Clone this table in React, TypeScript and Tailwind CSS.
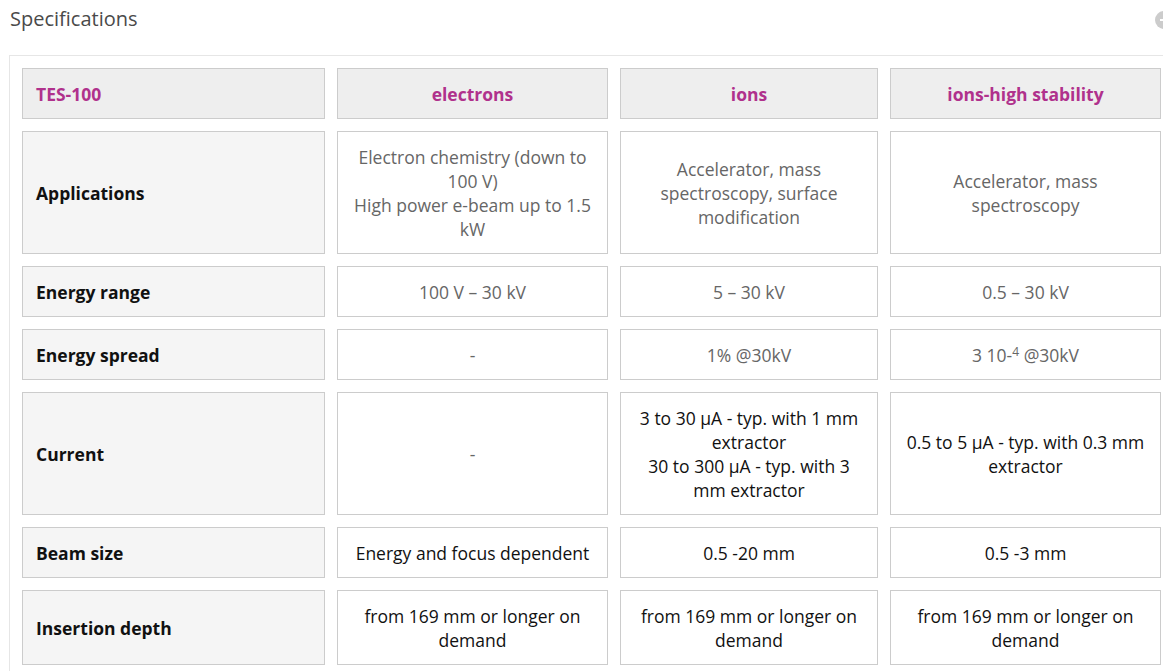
import React from "react";

type Cell = { lines: React.ReactNode[]; dark?: boolean };

const rows: { label: string; h: string; cells: Cell[] }[] = [
  {
    label: "Applications",
    h: "h-[123px]",
    cells: [
      { lines: ["Electron chemistry (down to", "100 V)", "High power e-beam up to 1.5", "kW"] },
      { lines: ["Accelerator, mass", "spectroscopy, surface", "modification"] },
      { lines: ["Accelerator, mass", "spectroscopy"] },
    ],
  },
  {
    label: "Energy range",
    h: "h-[51px]",
    cells: [
      { lines: ["100 V – 30 kV"] },
      { lines: ["5 – 30 kV"] },
      { lines: ["0.5 – 30 kV"] },
    ],
  },
  {
    label: "Energy spread",
    h: "h-[51px]",
    cells: [
      { lines: ["-"] },
      { lines: ["1% @30kV"] },
      {
        lines: [
          <>
            3 10-<sup className="text-[12px]">4</sup> @30kV
          </>,
        ],
      },
    ],
  },
  {
    label: "Current",
    h: "h-[123px]",
    cells: [
      { lines: ["-"] },
      {
        dark: true,
        lines: ["3 to 30 µA - typ. with 1 mm", "extractor", "30 to 300 µA - typ. with 3", "mm extractor"],
      },
      { dark: true, lines: ["0.5 to 5 µA - typ. with 0.3 mm", "extractor"] },
    ],
  },
  {
    label: "Beam size",
    h: "h-[51px]",
    cells: [
      { dark: true, lines: ["Energy and focus dependent"] },
      { dark: true, lines: ["0.5 -20 mm"] },
      { dark: true, lines: ["0.5 -3 mm"] },
    ],
  },
  {
    label: "Insertion depth",
    h: "h-[75px]",
    cells: [
      { dark: true, lines: ["from 169 mm or longer on", "demand"] },
      { dark: true, lines: ["from 169 mm or longer on", "demand"] },
      { dark: true, lines: ["from 169 mm or longer on", "demand"] },
    ],
  },
];

export default function App() {
  return (
    <div
      className="w-[1163px] h-[671px] overflow-hidden bg-white relative"
      style={{ fontFamily: '"Open Sans", "Liberation Sans", sans-serif' }}
    >
      <div className="h-[55px] pl-[10px] pt-[5px] text-[20px] leading-[28px] text-[#4a4a4a]">
        Specifications
      </div>
      <div className="absolute left-[1155px] top-[11px] w-[18px] h-[18px] rounded-full bg-[#cccccc] flex items-center justify-center">
        <div className="w-[8px] h-[2px] bg-white" />
      </div>
      <div className="ml-[9px] w-[1180px] border border-[#e6e6e6] p-[12px]">
        <div className="grid grid-cols-[303px_271px_258px_271px] gap-[12px] text-[17.5px] leading-[24px]">
          <div className="h-[51px] bg-[#eeeeee] border border-[#cccccc] flex items-center px-[13px] font-bold text-[#b0318c]">
            TES-100
          </div>
          {["electrons", "ions", "ions-high stability"].map((t) => (
            <div
              key={t}
              className="h-[51px] bg-[#eeeeee] border border-[#cccccc] flex items-center justify-center px-[13px] font-bold text-[#b0318c]"
            >
              {t}
            </div>
          ))}
          {rows.map((r) => (
            <React.Fragment key={r.label}>
              <div
                className={`${r.h} bg-[#f5f5f5] border border-[#cccccc] flex items-center px-[13px] font-bold text-[#111111]`}
              >
                {r.label}
              </div>
              {r.cells.map((c, i) => (
                <div
                  key={i}
                  className={`${r.h} bg-white border border-[#cccccc] flex flex-col items-center justify-center px-[4px] text-center ${
                    c.dark ? "text-[#111111]" : "text-[#666666]"
                  }`}
                >
                  {c.lines.map((l, j) => (
                    <div key={j} className="whitespace-nowrap">
                      {l}
                    </div>
                  ))}
                </div>
              ))}
            </React.Fragment>
          ))}
        </div>
      </div>
    </div>
  );
}
